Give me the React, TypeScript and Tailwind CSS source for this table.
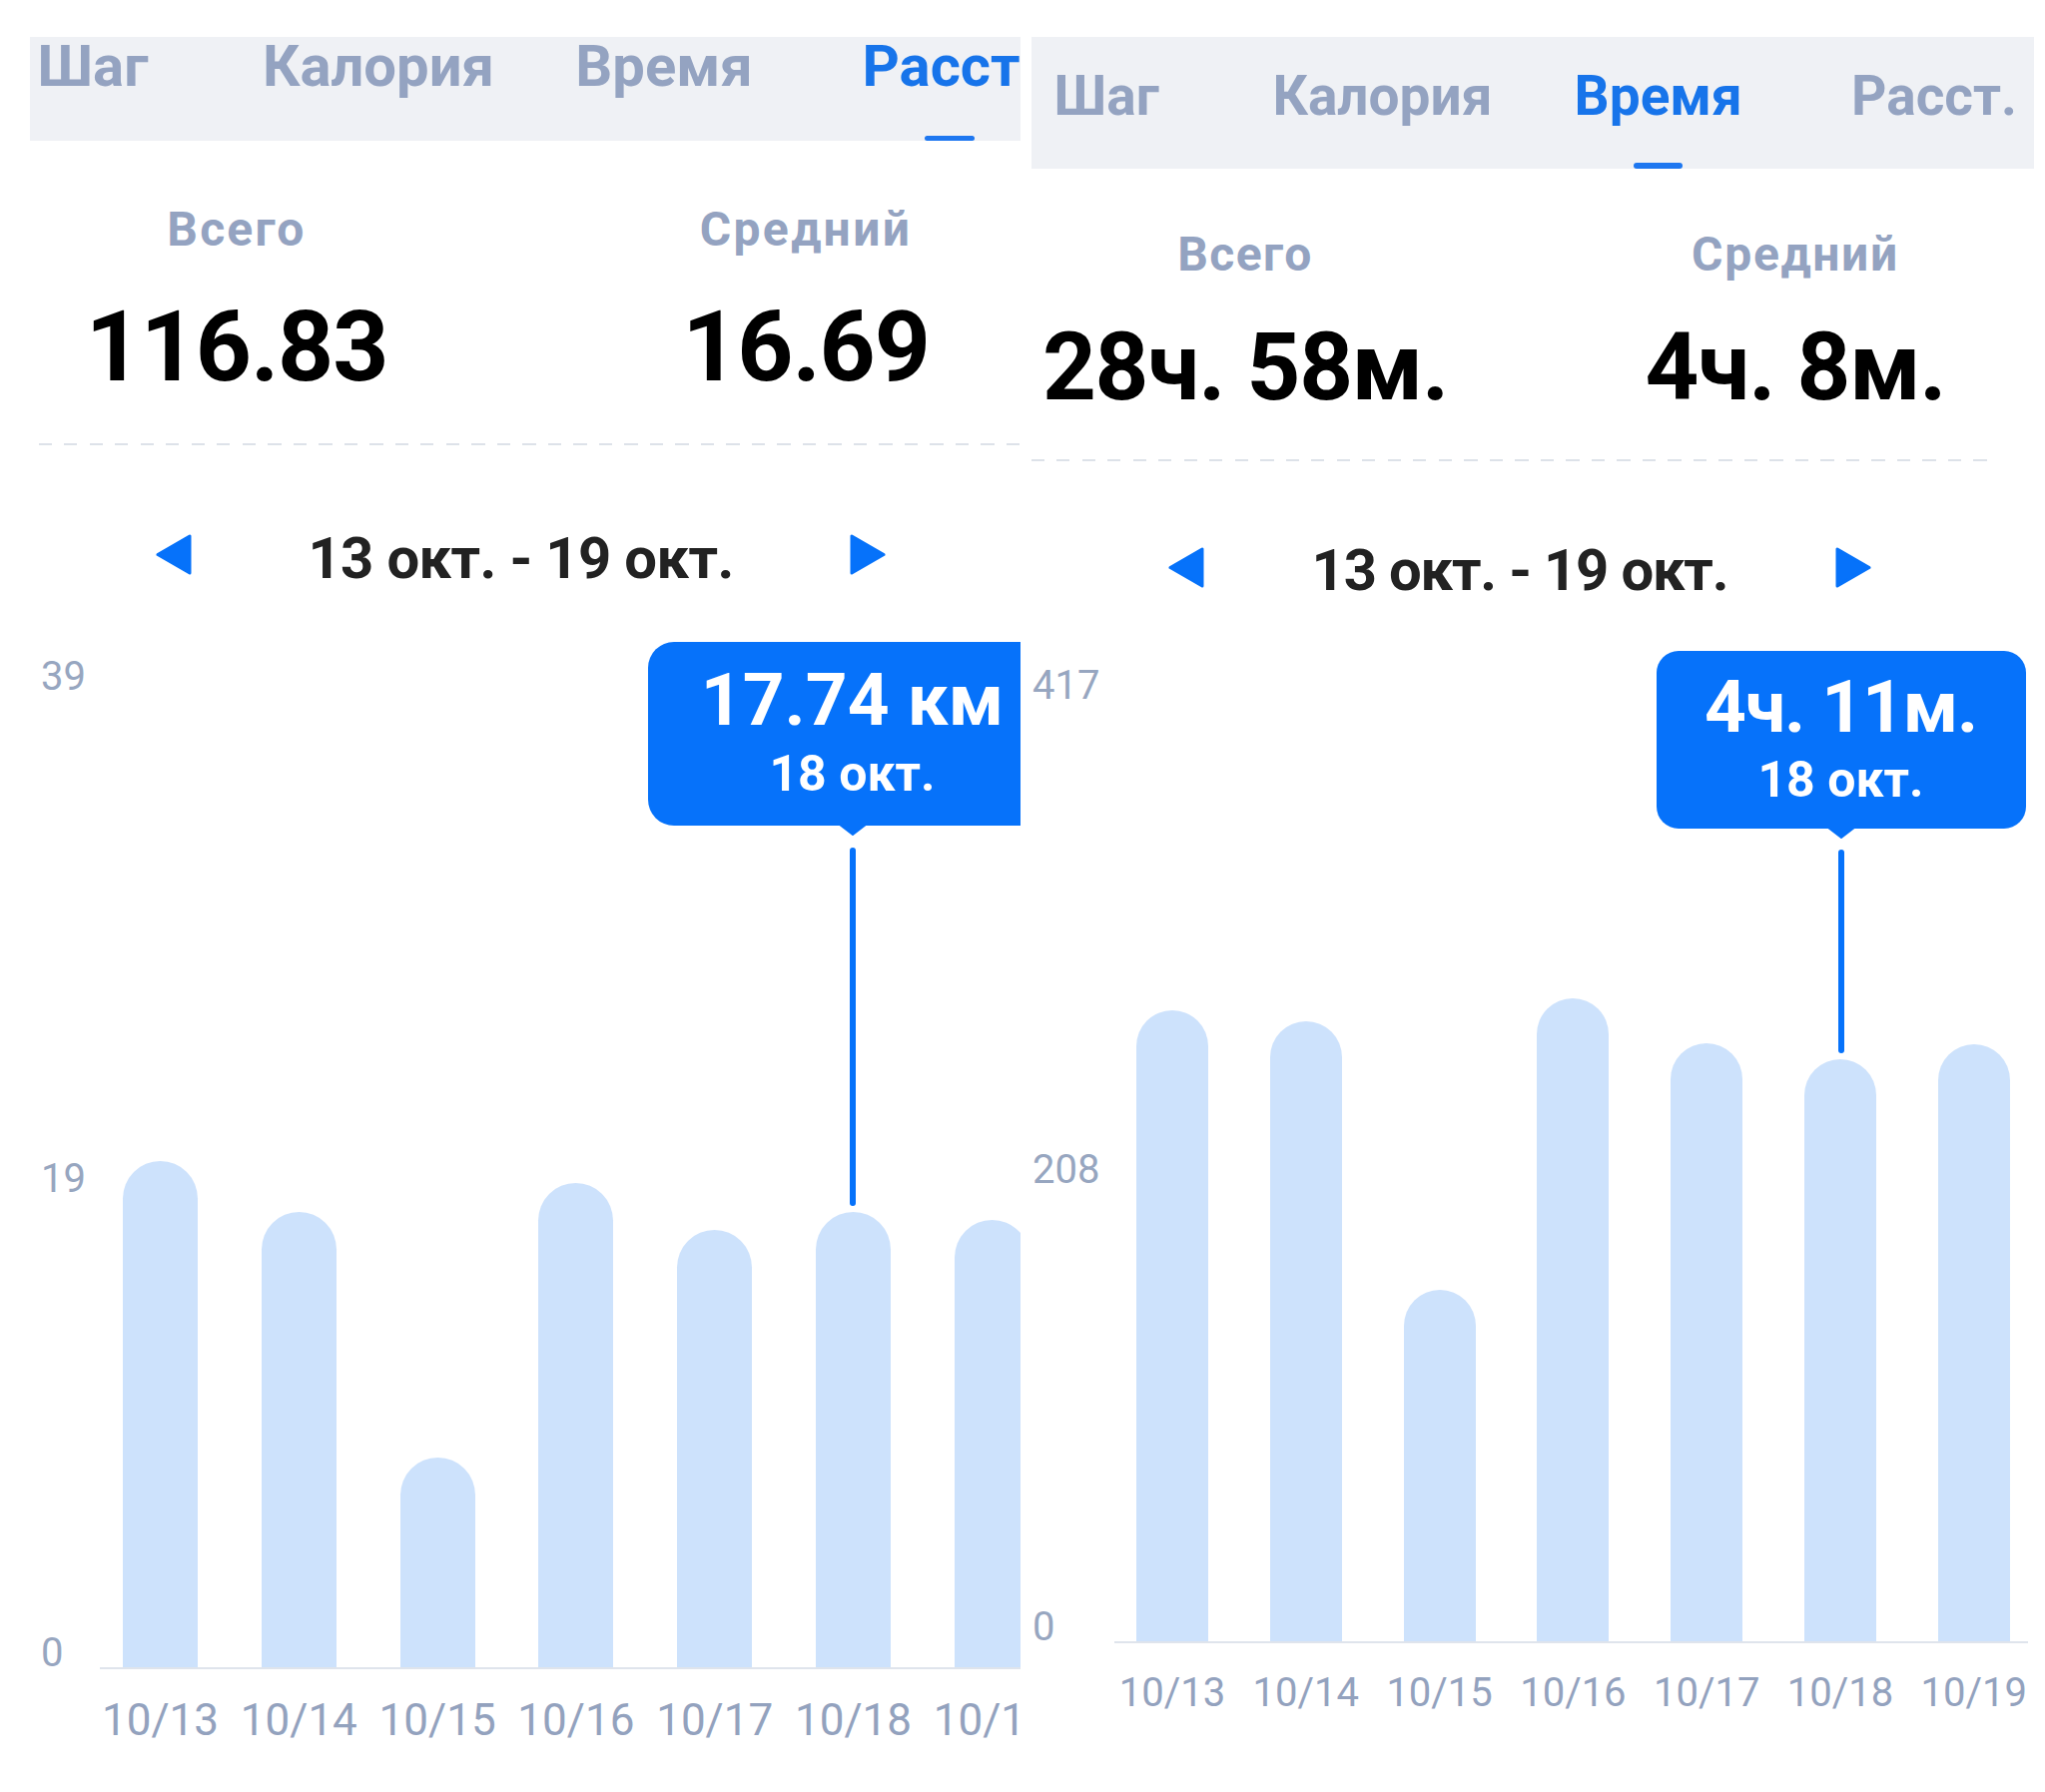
import React from "react";

type Tab = { label: string; active?: boolean };

function TriLeft() {
  return (
    <svg width="36" height="41" viewBox="0 0 36 41" className="shrink-0">
      <path d="M34 2 L34 39 L2 20.5 Z" fill="#0672fa" stroke="#0672fa" strokeWidth="3" strokeLinejoin="round" />
    </svg>
  );
}

function TriRight() {
  return (
    <svg width="36" height="41" viewBox="0 0 36 41" className="shrink-0">
      <path d="M2 2 L2 39 L34 20.5 Z" fill="#0672fa" stroke="#0672fa" strokeWidth="3" strokeLinejoin="round" />
    </svg>
  );
}

function Pointer() {
  return (
    <svg width="28" height="11" viewBox="0 0 28 11" className="-mt-[1px] shrink-0">
      <path d="M1 0 L27 0 L14 10 Z" fill="#0672fa" stroke="#0672fa" strokeWidth="2" strokeLinejoin="round" />
    </svg>
  );
}

const leftTabs: Tab[] = [
  { label: "Шаг" },
  { label: "Калория" },
  { label: "Время" },
  { label: "Расст.", active: true },
];
const rightTabs: Tab[] = [
  { label: "Шаг" },
  { label: "Калория" },
  { label: "Время", active: true },
  { label: "Расст." },
];
const dates = ["10/13", "10/14", "10/15", "10/16", "10/17", "10/18", "10/19"];
const leftBars = [507, 456, 210, 485, 438, 456, 448];
const rightBars = [632, 621, 352, 644, 599, 583, 598];

function LeftPanel() {
  return (
    <div className="w-[992px] shrink-0 overflow-hidden">
      {/* tabs */}
      <div className="h-[104px] bg-[#eff1f5] flex">
        <div className="flex ml-[-80px] h-full">
          {leftTabs.map((t) => (
            <div key={t.label} className="w-[286px] shrink-0 h-full flex flex-col items-center">
              <div
                className={
                  t.active
                    ? "text-[58px] leading-none font-bold text-[#1774ea] whitespace-nowrap"
                    : "text-[58px] leading-none font-bold text-[#94a3c1] whitespace-nowrap"
                }
              >
                {t.label}
              </div>
              {t.active && <div className="mt-auto w-[50px] h-[5px] rounded-full bg-[#1e77f0]" />}
            </div>
          ))}
        </div>
      </div>

      {/* stats */}
      <div className="mt-[64.6px] flex">
        <div className="w-[400px] ml-[7px] flex flex-col items-center">
          <div className="text-[48px] leading-none font-bold tracking-[2.2px] text-[#94a3c1]">Всего</div>
          <div className="mt-[45.9px] text-[98px] leading-none font-bold tracking-[-1.2px] text-black whitespace-nowrap">116.83</div>
        </div>
        <div className="w-[400px] ml-[170px] flex flex-col items-center">
          <div className="text-[48px] leading-none font-bold tracking-[2.4px] text-[#94a3c1]">Средний</div>
          <div className="mt-[45.9px] text-[98px] leading-none font-bold tracking-[-1.2px] text-black whitespace-nowrap">16.69</div>
        </div>
      </div>

      <div className="mt-[46.5px] ml-[9px] h-[2px] bg-[repeating-linear-gradient(90deg,#dde2e9_0_13px,transparent_13px_25.5px)]" />

      {/* date switcher */}
      <div className="mt-[84px] w-[983px] h-[58px] flex items-center px-[126px]">
        <div className="mb-[7px]">
          <TriLeft />
        </div>
        <div className="flex-1 text-center text-[58px] leading-none font-bold tracking-[-0.65px] text-[#222222] whitespace-nowrap">
          13 окт. - 19 окт.
        </div>
        <div className="mb-[7px]">
          <TriRight />
        </div>
      </div>

      {/* chart */}
      <div className="mt-[70px] flex">
        <div className="w-[70px] shrink-0 pl-[11px] flex flex-col text-[40px] leading-none text-[#97a6c0]">
          <div>39</div>
          <div className="mt-[463px]">19</div>
          <div className="mt-[435px]">0</div>
        </div>
        <div className="relative flex-1 h-[1014px] border-b-2 border-[#dfe4ec] flex items-end pl-[23px] gap-[63.8px]">
          {leftBars.map((h, i) => (
            <div key={i} className="w-[75px] shrink-0 rounded-t-full bg-[#cde2fc]" style={{ height: h }} />
          ))}
          <div className="absolute left-[753.5px] top-[-15px] -translate-x-1/2 flex flex-col items-center">
            <div className="w-[410px] h-[184px] rounded-[26px] bg-[#0672fa] flex flex-col items-center pt-[22.5px] text-white font-bold">
              <div className="text-[73px] leading-none whitespace-nowrap">17.74 км</div>
              <div className="mt-[11.5px] text-[50px] leading-none whitespace-nowrap">18 окт.</div>
            </div>
            <Pointer />
            <div className="mt-[12px] w-[6px] h-[359px] rounded-full bg-[#0672fa]" />
          </div>
        </div>
      </div>
      <div className="mt-[25px] flex pl-[93px] gap-[63.8px] text-[44px] leading-none text-[#93a2be]">
        {dates.map((d) => (
          <div key={d} className="w-[75px] shrink-0 flex justify-center whitespace-nowrap">
            {d}
          </div>
        ))}
      </div>
    </div>
  );
}

function RightPanel() {
  return (
    <div className="w-[1004px] shrink-0 overflow-hidden">
      {/* tabs */}
      <div className="h-[132px] bg-[#eff1f5] flex">
        <div className="flex ml-[-63px] h-full">
          {rightTabs.map((t) => (
            <div key={t.label} className="w-[276.3px] shrink-0 h-full flex flex-col items-center pt-[32px]">
              <div
                className={
                  t.active
                    ? "text-[55px] leading-none font-bold text-[#1774ea] whitespace-nowrap"
                    : "text-[55px] leading-none font-bold text-[#94a3c1] whitespace-nowrap"
                }
              >
                {t.label}
              </div>
              {t.active && <div className="mt-auto w-[49px] h-[6px] rounded-full bg-[#1e77f0]" />}
            </div>
          ))}
        </div>
      </div>

      {/* stats */}
      <div className="mt-[61.6px] flex">
        <div className="w-[420px] ml-[4px] flex flex-col items-center">
          <div className="text-[48px] leading-none font-bold tracking-[1.4px] text-[#94a3c1]">Всего</div>
          <div className="mt-[42.3px] text-[94px] leading-none font-bold tracking-[-1.2px] text-black whitespace-nowrap">28ч. 58м.</div>
        </div>
        <div className="w-[420px] ml-[131px] flex flex-col items-center">
          <div className="text-[48px] leading-none font-bold tracking-[1.7px] text-[#94a3c1]">Средний</div>
          <div className="mt-[42.3px] text-[94px] leading-none font-bold tracking-[-1.2px] text-black whitespace-nowrap">4ч. 8м.</div>
        </div>
      </div>

      <div className="mt-[45.1px] w-[969px] h-[2px] bg-[repeating-linear-gradient(90deg,#dde2e9_0_13px,transparent_13px_25.5px)]" />

      {/* date switcher */}
      <div className="mt-[80px] w-[978px] h-[58px] flex items-center px-[137px]">
        <div className="mb-[5px]">
          <TriLeft />
        </div>
        <div className="flex-1 text-center text-[58px] leading-none font-bold tracking-[-1.2px] text-[#222222] whitespace-nowrap">
          13 окт. - 19 окт.
        </div>
        <div className="mb-[5px]">
          <TriRight />
        </div>
      </div>

      {/* chart */}
      <div className="mt-[67px] flex">
        <div className="w-[83px] shrink-0 pl-[1px] flex flex-col text-[40px] leading-none text-[#97a6c0]">
          <div>417</div>
          <div className="mt-[445px]">208</div>
          <div className="mt-[418px]">0</div>
        </div>
        <div className="relative flex-1 mr-[6px] h-[979px] border-b-2 border-[#dfe4ec] flex items-end pl-[22px] gap-[61.8px]">
          {rightBars.map((h, i) => (
            <div key={i} className="w-[72px] shrink-0 rounded-t-full bg-[#cde2fc]" style={{ height: h }} />
          ))}
          <div className="absolute left-[727.5px] top-[-15px] -translate-x-1/2 flex flex-col items-center">
            <div className="w-[370px] h-[178px] rounded-[22px] bg-[#0672fa] flex flex-col items-center pt-[20.5px] text-white font-bold">
              <div className="text-[73px] leading-none tracking-[-1.1px] whitespace-nowrap">4ч. 11м.</div>
              <div className="mt-[10.5px] text-[50px] leading-none whitespace-nowrap">18 окт.</div>
            </div>
            <Pointer />
            <div className="mt-[11px] w-[6px] h-[204px] rounded-full bg-[#0672fa]" />
          </div>
        </div>
      </div>
      <div className="mt-[26px] flex pl-[105px] gap-[61.8px] text-[40px] leading-none text-[#93a2be]">
        {dates.map((d) => (
          <div key={d} className="w-[72px] shrink-0 flex justify-center whitespace-nowrap">
            {d}
          </div>
        ))}
      </div>
    </div>
  );
}

export default function App() {
  return (
    <div className="w-[2048px] h-[1795px] bg-white overflow-hidden font-['Roboto',sans-serif]">
      <div className="flex pl-[30px] pt-[37px]">
        <LeftPanel />
        <div className="ml-[11px]">
          <RightPanel />
        </div>
      </div>
    </div>
  );
}
